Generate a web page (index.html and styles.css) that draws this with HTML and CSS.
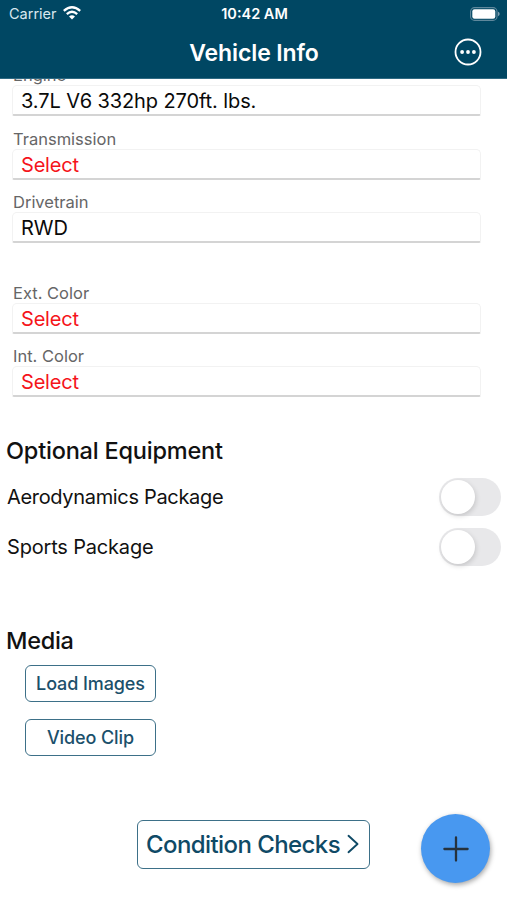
FILE: index.html
```html
<!DOCTYPE html>
<html lang="en">
<head>
<meta charset="utf-8">
<title>Vehicle Info</title>
<link rel="stylesheet" href="styles.css">
</head>
<body>
<header class="header">
  <div class="status">
    <div class="carrier"><span class="carrier-name">Carrier</span>
      <svg class="wifi" width="18" height="14" viewBox="0 0 18 14" fill="none" stroke="#fff" stroke-width="2.3"><path d="M.8 4.9Q9-2.3 17.2 4.9M3.8 8.1Q9 3.5 14.2 8.1"/><path d="M9 13.6 6 10.5Q9 8.1 12 10.5Z" fill="#fff" stroke="none"/></svg>
    </div>
    <span class="time">10:42 AM</span>
    <svg class="battery" width="30" height="14" viewBox="0 0 30 14"><rect x=".6" y=".6" width="26.4" height="12.8" rx="4" fill="none" stroke="#5f889c" stroke-width="1.1"/><rect x="2.3" y="2.3" width="23" height="9.4" rx="2.2" fill="#fff"/><path d="M28 4.8q1.7.6 1.7 2.2T28 9.2Z" fill="#7c9eb0"/></svg>
  </div>
  <div class="nav">
    <h1 class="title">Vehicle Info</h1>
    <svg class="more" width="28" height="28" viewBox="0 0 28 28"><circle cx="14" cy="14" r="12.5" fill="none" stroke="#fff" stroke-width="1.8"/><g fill="#fff"><circle cx="8.1" cy="14" r="1.9"/><circle cx="14" cy="14" r="1.9"/><circle cx="19.9" cy="14" r="1.9"/></g></svg>
  </div>
</header>
<main class="content">
  <div class="fields">
    <div class="field"><div class="label">Engine</div><div class="value engine">3.7L V6 332hp 270ft. lbs.</div></div>
    <div class="field"><div class="label">Transmission</div><div class="value empty">Select</div></div>
    <div class="field"><div class="label">Drivetrain</div><div class="value">RWD</div></div>
    <div class="field colors"><div class="label">Ext. Color</div><div class="value empty">Select</div></div>
    <div class="field"><div class="label">Int. Color</div><div class="value empty">Select</div></div>
  </div>
  <h2 class="heading equipment">Optional Equipment</h2>
  <div class="option"><span class="aero">Aerodynamics Package</span><span class="switch"><span class="knob"></span></span></div>
  <div class="option"><span class="sports">Sports Package</span><span class="switch"><span class="knob"></span></span></div>
  <h2 class="heading media">Media</h2>
  <div class="buttons">
    <button class="button">Load Images</button>
    <button class="button">Video Clip</button>
  </div>
  <button class="checks"><span>Condition Checks</span><svg width="12" height="20" viewBox="0 0 12 20" fill="none" stroke="#0f4a66" stroke-width="1.9" stroke-linecap="round" stroke-linejoin="round"><path d="m1.5 1.8 9 8.2-9 8.2"/></svg></button>
</main>
<button class="add" aria-label="Add"><svg width="26" height="26" viewBox="0 0 26 26" stroke="#26323d" stroke-width="2.3" stroke-linecap="round"><path d="M13 1.4v23.2M1.4 13h23.2"/></svg></button>
</body>
</html>
```
FILE: styles.css
```css
* { box-sizing: border-box; }
body { margin: 0; height: 900px; overflow: hidden; background: #fff; color: #111; font-family: Inter, "Liberation Sans", sans-serif; display: flex; flex-direction: column; }
h1, h2 { margin: 0; }
button { font-family: inherit; padding: 0; }
.header { flex: none; height: 79px; background: #004763; color: #fff; border-bottom: 1px solid #2e6a83; }
.status { display: grid; grid-template-columns: 1fr auto 1fr; height: 27px; align-items: center; padding: 0 7px 0 9px; }
.carrier { display: flex; align-items: center; gap: 6px; font-size: 14.5px; color: #d9e8ef; }
.wifi { margin-top: -2px; }
.time { font-size: 14.5px; font-weight: 600; }
.battery { justify-self: end; }
.nav { display: grid; grid-template-columns: 1fr auto 1fr; align-items: center; height: 51px; padding-right: 25px; padding-left: 26px; }
.title { grid-column: 2; font-size: 23px; font-weight: 600; letter-spacing: -.1px; }
.more { justify-self: end; margin-top: -1px; }
.content { flex: 1; overflow: hidden; display: flex; flex-direction: column; }
.fields { flex: none; margin: -14px 26px 0 12px; }
.field { margin-bottom: 12.5px; }
.colors { margin-top: 39.5px; }
.label { height: 20px; line-height: 20px; padding-left: 1px; font-size: 16.5px; color: #666; }
.value { height: 31px; line-height: 31px; padding-left: 8px; border: 1px solid #f2f2f2; border-bottom: 2px solid #d4d4d4; border-radius: 5px 5px 2px 2px; font-size: 20px; color: #0a0a0a; }
.engine { letter-spacing: -.1px; }
.empty { color: #f5141b; letter-spacing: -.2px; }
.heading { flex: none; height: 32px; line-height: 32px; padding-left: 6px; font-size: 23.5px; font-weight: 500; letter-spacing: -.2px; }
.equipment { margin-top: 25.5px; }
.option { flex: none; height: 50px; display: flex; align-items: center; justify-content: space-between; padding: 0 6px 0 7px; font-size: 20px; }
.aero { letter-spacing: -.33px; }
.sports { letter-spacing: -.18px; }
.equipment + .option { margin-top: 4.5px; }
.switch { display: flex; width: 62px; height: 38px; padding: 2px; border-radius: 19px; background: #e8e8ea; }
.knob { width: 34px; height: 34px; border-radius: 50%; background: #fff; box-shadow: 1px 2px 5px #00000026; }
.media { margin-top: 53px; letter-spacing: -.3px; }
.buttons { flex: none; display: flex; flex-direction: column; gap: 17px; margin: 8px 0 0 25px; }
.button { width: 131px; height: 37px; border: 1.5px solid #3d7088; border-radius: 6px; background: #fff; color: #1b506b; font-size: 18px; font-weight: 500; letter-spacing: -.1px; }
.checks { flex: none; display: flex; align-items: center; justify-content: space-between; width: 233px; height: 49px; margin: 64px 0 0 137px; padding: 0 10px 0 8px; border: 1.5px solid #3d7088; border-radius: 6px; background: #fff; color: #0f4a66; font-size: 24px; font-weight: 500; letter-spacing: -.58px; white-space: nowrap; }
.add { position: absolute; left: 421px; top: 814px; width: 69px; height: 69px; display: grid; place-items: center; border: 0; border-radius: 50%; background: #4898f0; box-shadow: 1px 2px 5px #00000059; }
```
